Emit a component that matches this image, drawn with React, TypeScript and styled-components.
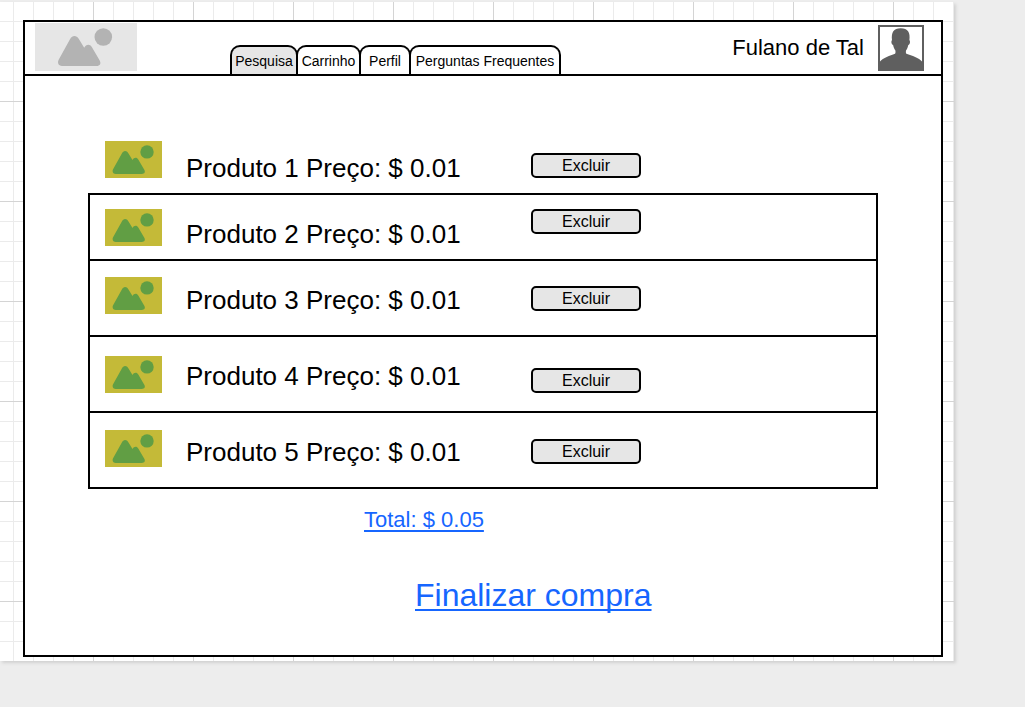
import React from "react";
import styled, { createGlobalStyle } from "styled-components";

const GlobalStyle = createGlobalStyle`
  *, *::before, *::after { box-sizing: border-box; }
  body {
    margin: 0;
    padding: 2px 0 8px;
    background: #ededed;
    color: #000;
    font-family: "Liberation Sans", Arial, Helvetica, sans-serif;
  }
`;

const Sheet = styled.div`
  margin-right: 71px;
  padding: 18px 11px 4px 23px;
  background-color: #fff;
  background-image:
    linear-gradient(to right, #d4d4d4 1px, transparent 1px),
    linear-gradient(to bottom, #d4d4d4 1px, transparent 1px),
    linear-gradient(to right, #ebebeb 1px, transparent 1px),
    linear-gradient(to bottom, #ebebeb 1px, transparent 1px);
  background-size: 100px 100px, 100px 100px, 20px 20px, 20px 20px;
  background-position: 93px 0, 0 99px, 13px 0, 0 19px;
  box-shadow: 2px 2px 3px #d1d1d1;
`;

const Frame = styled.div`
  border: 2px solid #000;
  background: #fff;
`;

const Header = styled.header`
  display: flex;
  align-items: stretch;
  justify-content: space-between;
  height: 54px;
  padding: 0 17px 0 10px;
  border-bottom: 2px solid #000;
`;

const Brand = styled.div`
  display: flex;
  gap: 93px;
`;

const Logo = styled.svg`
  width: 102px;
  height: 48px;
  margin-top: 1px;
  background: #e6e6e6;
  fill: #b3b3b3;
`;

const Tabs = styled.nav`
  display: flex;
  align-items: flex-end;
`;

const Tab = styled.a<{ $width: number; $active?: boolean }>`
  width: ${(p) => p.$width}px;
  height: 29px;
  border: 2px solid #000;
  border-bottom: 0;
  border-radius: 10px 10px 0 0;
  background: ${(p) => (p.$active ? "#e6e6e6" : "#fff")};
  color: #000;
  font-size: 14px;
  line-height: 29px;
  text-align: center;
  text-decoration: none;
  white-space: nowrap;

  & + & { margin-left: -2px; }
`;

const User = styled.div`
  display: flex;
  align-items: center;
  gap: 14px;
  font-size: 22px;
  line-height: 28px;
  white-space: nowrap;
`;

const Avatar = styled.svg`
  width: 46px;
  height: 46px;
  border: 2px solid #5f5f5f;
  fill: #5f5f5f;
`;

const Main = styled.main`
  padding: 51px 63px 42px;
`;

const Products = styled.ul`
  margin: 0;
  padding: 0;
  list-style: none;
`;

const Product = styled.li<{ $height: number; $boxed: boolean }>`
  display: grid;
  grid-template-columns: 57px 321px 110px;
  column-gap: 24px;
  align-items: start;
  height: ${(p) => p.$height}px;
  padding: 0 15px;
  border: 2px solid ${(p) => (p.$boxed ? "#000" : "transparent")};
  border-bottom: 0;

  &:last-child { border-bottom: 2px solid #000; }
`;

const Thumb = styled.svg<{ $top: number }>`
  width: 57px;
  height: 37px;
  margin-top: ${(p) => p.$top}px;
  background: #c4ba38;
  fill: #619e44;
`;

const Label = styled.span`
  padding-top: 24px;
  font-size: 26px;
  line-height: 30px;
  white-space: nowrap;
`;

const Remove = styled.button<{ $top: number }>`
  height: 25px;
  margin-top: ${(p) => p.$top}px;
  padding: 0;
  border: 2px solid #000;
  border-radius: 5px;
  background: #e6e6e6;
  color: #000;
  font: 16px/20px "Liberation Sans", Arial, sans-serif;
`;

const Checkout = styled.div`
  display: flex;
  flex-direction: column;
  align-items: flex-start;
  gap: 44px;
  padding: 18px 0 0 276px;
`;

const TextLink = styled.a<{ $large?: boolean }>`
  margin-left: ${(p) => (p.$large ? 51 : 0)}px;
  color: #1666ff;
  font-size: ${(p) => (p.$large ? 32 : 22)}px;
  line-height: ${(p) => (p.$large ? 36 : 26)}px;
  text-decoration: underline;
  text-decoration-thickness: 2px;
  text-decoration-skip-ink: none;
  text-underline-offset: 3px;
`;

const Landscape = () => (
  <>
    <path d="M27 43 C23.3 43 22.1 39.6 23.8 36.6 L35 16.3 C37.2 12 41.4 11.9 43.7 15.8 L49.2 24.8 C51 21 54.8 20.6 56.8 24 L64.7 37.5 C66.4 40.6 65 43 61.5 43 Z" />
    <circle cx="68.3" cy="14" r="8.8" />
  </>
);

const tabs = [
  { name: "Pesquisa", width: 68, active: true },
  { name: "Carrinho", width: 65 },
  { name: "Perfil", width: 52 },
  { name: "Perguntas Frequentes", width: 152 },
];

const products = [
  { name: "Produto 1", price: "0.01", height: 66, thumbTop: 12, buttonTop: 24 },
  { name: "Produto 2", price: "0.01", height: 66, thumbTop: 14, buttonTop: 14 },
  { name: "Produto 3", price: "0.01", height: 76, thumbTop: 16, buttonTop: 25 },
  { name: "Produto 4", price: "0.01", height: 76, thumbTop: 19, buttonTop: 31 },
  { name: "Produto 5", price: "0.01", height: 78, thumbTop: 17, buttonTop: 26 },
];

export default function App() {
  return (
    <>
      <GlobalStyle />
      <Sheet>
        <Frame>
          <Header>
            <Brand>
              <Logo viewBox="0 0 102 48" role="img" aria-label="Logo">
                <Landscape />
              </Logo>
              <Tabs>
                {tabs.map((t) => (
                  <Tab key={t.name} href="#" $width={t.width} $active={t.active}>
                    {t.name}
                  </Tab>
                ))}
              </Tabs>
            </Brand>
            <User>
              <span>Fulano de Tal</span>
              <Avatar viewBox="0 0 42 42" aria-hidden="true">
                <path d="M0 42 V34.5 C3 31 10 28.5 15 26.8 C15.6 26.2 15.6 25 15.4 23.5 C14.2 22 13.6 20 13.2 18.2 C11.4 17.5 10.8 14.5 12 13 C11.2 5.5 13.5 1.2 20.7 1.2 C27.9 1.2 30.4 5.5 29.4 13 C30.6 14.5 30 17.5 28.2 18.2 C27.8 20.5 27 22 26 23.5 C25.8 25 25.8 26.2 26.4 26.8 C32 28.5 39 31 42 34.5 V42 Z" />
              </Avatar>
            </User>
          </Header>
          <Main>
            <Products>
              {products.map((p, i) => (
                <Product key={p.name} $height={p.height} $boxed={i > 0}>
                  <Thumb $top={p.thumbTop} viewBox="13 0 75 48" aria-hidden="true">
                    <Landscape />
                  </Thumb>
                  <Label>
                    {p.name} Preço: $ {p.price}
                  </Label>
                  <Remove type="button" $top={p.buttonTop}>
                    Excluir
                  </Remove>
                </Product>
              ))}
            </Products>
            <Checkout>
              <TextLink href="#">Total: $ 0.05</TextLink>
              <TextLink href="#" $large>
                Finalizar compra
              </TextLink>
            </Checkout>
          </Main>
        </Frame>
      </Sheet>
    </>
  );
}
